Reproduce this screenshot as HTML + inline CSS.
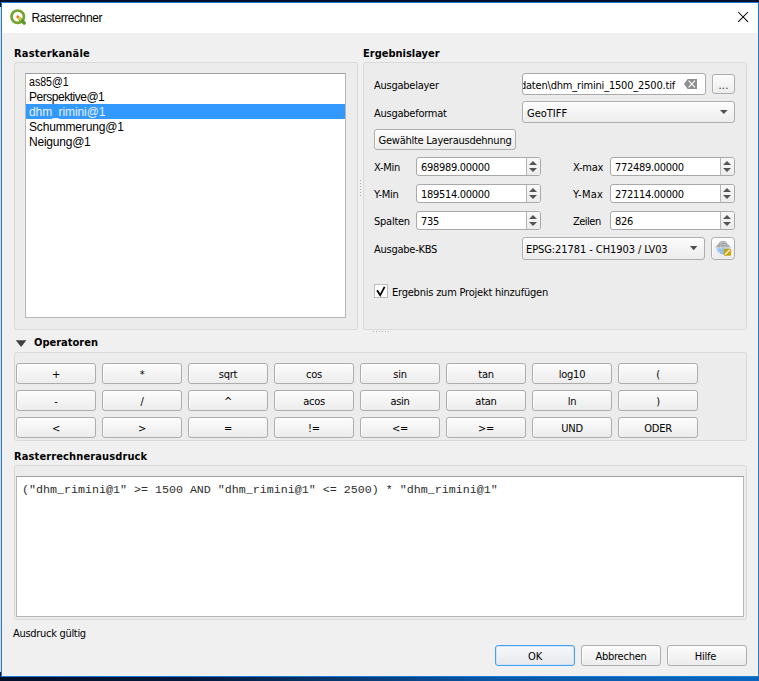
<!DOCTYPE html>
<html lang="de">
<head>
<meta charset="utf-8">
<title>Rasterrechner</title>
<style>
html,body{margin:0;padding:0;}
body{width:759px;height:681px;overflow:hidden;position:relative;background:#04102a;
  font-family:"DejaVu Sans Condensed","DejaVu Sans","Liberation Sans",sans-serif;font-stretch:condensed;font-size:11px;color:#000;}
*{box-sizing:border-box;}
.abs{position:absolute;}
#wall-left{left:0;top:7px;width:1px;height:665px;background:#dcd8d6;}
#wall-bottom{left:0;top:677px;width:759px;height:4px;background:linear-gradient(to right,#04102a 0%,#05183c 25%,#08386f 45%,#0a57a6 65%,#0b66c0 100%);}
#win{left:1px;top:2px;width:758px;height:675px;border:1px solid #1a7bd6;background:#f0f0f0;}
#edge-r{left:757px;top:3px;width:1px;height:673px;background:#faf6f2;}
#titlebar{left:2px;top:3px;width:755px;height:30px;background:#fff;}
.t{position:absolute;white-space:nowrap;line-height:16px;height:16px;letter-spacing:-0.25px;}
.li{font-family:"Liberation Sans",sans-serif;font-stretch:normal;font-size:12px;}
.b{font-weight:bold;letter-spacing:0;}
.gb{position:absolute;border:1px solid #d9d9d9;border-radius:2.5px;background:#ececec;}
.btn{position:absolute;border:1px solid #adadad;border-radius:3px;background:linear-gradient(to bottom,#fcfcfc 0%,#f4f4f4 50%,#ececec 100%);box-shadow:inset 1px 1px 0 rgba(255,255,255,.7);text-align:center;line-height:22px;white-space:nowrap;letter-spacing:-0.25px;}
.op{width:80px;height:21px;}
.spin{position:absolute;width:125px;height:19px;border:1px solid #a9a9a9;border-radius:3px;background:#fff;}
.spin .sb{position:absolute;right:0;top:0;width:14px;height:17px;border-left:1px solid #b5b5b5;background:linear-gradient(to bottom,#f8f8f8,#ececec);border-radius:0 2px 2px 0;}
.spin .sb::before{content:"";position:absolute;left:2px;top:3px;width:0;height:0;border-left:4px solid transparent;border-right:4px solid transparent;border-bottom:4px solid #555;}
.spin .sb::after{content:"";position:absolute;left:2px;top:10px;width:0;height:0;border-left:4px solid transparent;border-right:4px solid transparent;border-top:4px solid #555;}
.spin .v{position:absolute;left:4px;top:0;line-height:19px;letter-spacing:-0.3px;}
.combo{position:absolute;border:1px solid #adadad;border-radius:3px;background:linear-gradient(to bottom,#fcfcfc 0%,#f4f4f4 50%,#ececec 100%);box-shadow:inset 1px 1px 0 rgba(255,255,255,.7);}
</style>
</head>
<body>
<div class="abs" id="wall-left"></div>
<div class="abs" id="wall-bottom"></div>
<div class="abs" id="win"></div>
<div class="abs" id="edge-r"></div>
<div class="abs" id="titlebar"></div>

<!-- title -->
<svg class="abs" style="left:9px;top:9px" width="18" height="17" viewBox="0 0 18 17">
  <circle cx="8.7" cy="7.7" r="6.2" fill="none" stroke="#73a52e" stroke-width="2.7"/>
  <path d="M11.2 10.2 L15.2 14" stroke="#5f962c" stroke-width="3.4" stroke-linecap="round"/>
  <path d="M9.6 8.6 L11.4 10.4" stroke="#b9cf3a" stroke-width="2.6" stroke-linecap="round"/>
  <circle cx="9.9" cy="8.9" r="1.2" fill="#f3d23a"/>
  <circle cx="8.8" cy="7.8" r="1.5" fill="#ee7a18"/>
</svg>
<div class="t" style="left:31.4px;top:10px;font-family:'Liberation Sans',sans-serif;font-stretch:normal;font-size:12px;letter-spacing:-0.42px">Rasterrechner</div>
<svg class="abs" style="left:737px;top:11px" width="12" height="12" viewBox="0 0 12 12"><path d="M1.2 1 L11 10.8 M11 1 L1.2 10.8" stroke="#000" stroke-width="1.05" fill="none"/></svg>

<!-- group titles -->
<div class="t b" style="left:14px;top:46px;letter-spacing:0.2px">Rasterkanäle</div>
<div class="t b" style="left:363px;top:46px">Ergebnislayer</div>

<!-- left group -->
<div class="gb" style="left:14px;top:62px;width:344px;height:268px"></div>
<div class="abs" id="list" style="left:25px;top:73px;width:321px;height:245px;background:#fff;border:1px solid #b6b6b6;border-top-color:#a0a0a0;"></div>
<div class="abs" style="left:26px;top:104px;width:319px;height:15px;background:#3399ff"></div>
<div class="t li" style="left:29px;top:74px;letter-spacing:0;transform:scaleX(.885);transform-origin:0 0">as85@1</div>
<div class="t li" style="left:29px;top:89px;letter-spacing:-0.48px">Perspektive@1</div>
<div class="t li" style="left:29px;top:104px;color:#e6f1ff;letter-spacing:-0.1px">dhm_rimini@1</div>
<div class="t li" style="left:29px;top:119px;letter-spacing:-0.17px">Schummerung@1</div>
<div class="t li" style="left:29px;top:134px;letter-spacing:-0.22px">Neigung@1</div>

<!-- right group -->
<div class="gb" style="left:363px;top:62px;width:384px;height:268px"></div>
<div class="t" style="left:374px;top:78px">Ausgabelayer</div>
<div class="t" style="left:374px;top:106px">Ausgabeformat</div>
<div class="abs" id="ledit" style="left:522px;top:73px;width:184px;height:22px;background:#fff;border:1px solid #a9a9a9;border-radius:3px;overflow:hidden"></div>
<div class="abs" style="left:523px;top:74px;width:160px;height:20px;overflow:hidden"><div class="t" style="right:8px;top:4px;letter-spacing:-0.19px">daten\dhm_rimini_1500_2500.tif</div></div>
<svg class="abs" style="left:684px;top:79px" width="13" height="10" viewBox="0 0 13 10"><path d="M0 5 L3.6 0 H13 V10 H3.6 Z" fill="#8e8e8e"/><path d="M4.6 1.7 L11 8.3 M11 1.7 L4.6 8.3" stroke="#fff" stroke-width="1.1"/></svg>
<div class="btn" style="left:712px;top:74px;width:23px;height:20px;line-height:22px;letter-spacing:0.2px;color:#222">...</div>
<div class="combo" style="left:522px;top:101px;width:213px;height:22px"></div>
<div class="t" style="left:527px;top:106px;letter-spacing:0">GeoTIFF</div>
<svg class="abs" style="left:720px;top:110px" width="8" height="4" viewBox="0 0 8 4"><path d="M0 0 H7.6 L3.8 4 Z" fill="#4d4d4d"/></svg>
<div class="btn" style="left:374px;top:129px;width:142px;height:21px">Gewählte Layerausdehnung</div>

<div class="t" style="left:374px;top:160px">X-Min</div>
<div class="t" style="left:374px;top:187px">Y-Min</div>
<div class="t" style="left:374px;top:214px">Spalten</div>
<div class="t" style="left:573px;top:160px">X-max</div>
<div class="t" style="left:573px;top:187px;letter-spacing:0.3px">Y-Max</div>
<div class="t" style="left:573px;top:214px;letter-spacing:-0.5px">Zeilen</div>
<div class="spin" style="left:416px;top:157px"><div class="v">698989.00000</div><div class="sb"></div></div>
<div class="spin" style="left:416px;top:184px"><div class="v">189514.00000</div><div class="sb"></div></div>
<div class="spin" style="left:416px;top:211px"><div class="v">735</div><div class="sb"></div></div>
<div class="spin" style="left:610px;top:157px"><div class="v">772489.00000</div><div class="sb"></div></div>
<div class="spin" style="left:610px;top:184px"><div class="v">272114.00000</div><div class="sb"></div></div>
<div class="spin" style="left:610px;top:211px"><div class="v">826</div><div class="sb"></div></div>

<div class="t" style="left:374px;top:242px">Ausgabe-KBS</div>
<div class="combo" style="left:522px;top:237px;width:183px;height:23px"></div>
<div class="t" style="left:526px;top:242px;letter-spacing:-0.08px">EPSG:21781 - CH1903 / LV03</div>
<svg class="abs" style="left:690px;top:246px" width="8" height="5" viewBox="0 0 8 5"><path d="M0 0 H7.4 L3.7 4.3 Z" fill="#4d4d4d"/></svg>
<div class="btn" style="left:711px;top:237px;width:24px;height:23px;border-radius:3.5px"></div>
<svg class="abs" style="left:713px;top:239px" width="20" height="19" viewBox="713 239 20 19">
  <path d="M716 247.5 A7 7 0 0 0 730 247.5 Z" fill="#b0d5f6"/>
  <path d="M718 250.5 H728 M720 253 H726 M723 247.5 V254.5 M719.5 247.5 Q720 252 722 254 " stroke="#7fb0e2" stroke-width="0.7" fill="none"/>
  <path d="M720.8 241 H725 L731 247.6 H715 Z" fill="#bcbec0"/>
  <path d="M719 243.3 H727 M717 245.6 H729 M723 241 V247.6 M720 244 L718.5 247.6 M726 244 L727.5 247.6" stroke="#8e9092" stroke-width="0.8" stroke-dasharray="1.2 1" fill="none"/>
  <rect x="723.7" y="248.8" width="7.4" height="7" rx="1" fill="#c9a616"/>
  <path d="M725.4 254.2 L729.7 250.2" stroke="#fff" stroke-width="1.15" stroke-linecap="round"/>
</svg>

<div class="abs" style="left:374px;top:284px;width:14px;height:14px;background:#fff;border:1px solid #bcbcbc"></div>
<svg class="abs" style="left:374px;top:284px" width="14" height="14" viewBox="0 0 14 14"><path d="M3.1 6.3 L6.2 11.3 L10.6 2.9" fill="none" stroke="#000" stroke-width="1.8" stroke-linejoin="miter"/></svg>
<div class="t" style="left:392px;top:285px;letter-spacing:-0.22px">Ergebnis zum Projekt hinzufügen</div>

<div class="abs" style="left:360px;top:180px;width:1px;height:16px;background:linear-gradient(#b2b2b2 1px,transparent 1px) 0 0/1px 3px"></div>
<div class="abs" style="left:373px;top:331px;width:16px;height:1px;background:linear-gradient(to right,#b2b2b2 1px,transparent 1px) 0 0/3px 1px"></div>
<!-- operators -->
<svg class="abs" style="left:15px;top:340px" width="12" height="7" viewBox="0 0 12 7"><path d="M0.8 0.2 H11.4 L6.1 6.9 Z" fill="#404040"/></svg>
<div class="t b" style="left:34px;top:335px">Operatoren</div>
<div class="gb" style="left:14px;top:352px;width:733px;height:89px"></div>

<div class="btn op" style="left:16px;top:363px">+</div>
<div class="btn op" style="left:102px;top:363px">*</div>
<div class="btn op" style="left:188px;top:363px">sqrt</div>
<div class="btn op" style="left:274px;top:363px">cos</div>
<div class="btn op" style="left:360px;top:363px">sin</div>
<div class="btn op" style="left:446px;top:363px">tan</div>
<div class="btn op" style="left:532px;top:363px">log10</div>
<div class="btn op" style="left:618px;top:363px">(</div>
<div class="btn op" style="left:16px;top:390px">-</div>
<div class="btn op" style="left:102px;top:390px">/</div>
<div class="btn op" style="left:188px;top:390px">^</div>
<div class="btn op" style="left:274px;top:390px">acos</div>
<div class="btn op" style="left:360px;top:390px">asin</div>
<div class="btn op" style="left:446px;top:390px">atan</div>
<div class="btn op" style="left:532px;top:390px">ln</div>
<div class="btn op" style="left:618px;top:390px">)</div>
<div class="btn op" style="left:16px;top:417px">&lt;</div>
<div class="btn op" style="left:102px;top:417px">&gt;</div>
<div class="btn op" style="left:188px;top:417px">=</div>
<div class="btn op" style="left:274px;top:417px">!=</div>
<div class="btn op" style="left:360px;top:417px">&lt;=</div>
<div class="btn op" style="left:446px;top:417px">&gt;=</div>
<div class="btn op" style="left:532px;top:417px">UND</div>
<div class="btn op" style="left:618px;top:417px">ODER</div>

<!-- expression -->
<div class="t b" style="left:14px;top:449px;letter-spacing:0.12px">Rasterrechnerausdruck</div>
<div class="gb" style="left:14px;top:465px;width:733px;height:155px"></div>
<div class="abs" style="left:16px;top:476px;width:728px;height:141px;background:#fff;border:1px solid #b6b6b6;border-top-color:#a0a0a0"></div>
<div class="t" style="left:22px;top:482px;font-family:'Liberation Mono',monospace;font-size:11.67px;letter-spacing:0;font-stretch:normal;color:#2e2e2e">("dhm_rimini@1" &gt;= 1500 AND "dhm_rimini@1" &lt;= 2500) * "dhm_rimini@1"</div>

<div class="t" style="left:13px;top:626px;letter-spacing:-0.3px">Ausdruck gültig</div>
<div class="btn" style="left:495px;top:645px;width:80px;height:21px;border-color:#479ff0;background:linear-gradient(to bottom,#f6f8fa,#e7e9ee);box-shadow:inset 0 0 0 1px #cde4fa">OK</div>
<div class="btn" style="left:581px;top:645px;width:80px;height:21px">Abbrechen</div>
<div class="btn" style="left:667px;top:645px;width:80px;height:21px;padding-right:3px">Hilfe</div>
</body>
</html>
